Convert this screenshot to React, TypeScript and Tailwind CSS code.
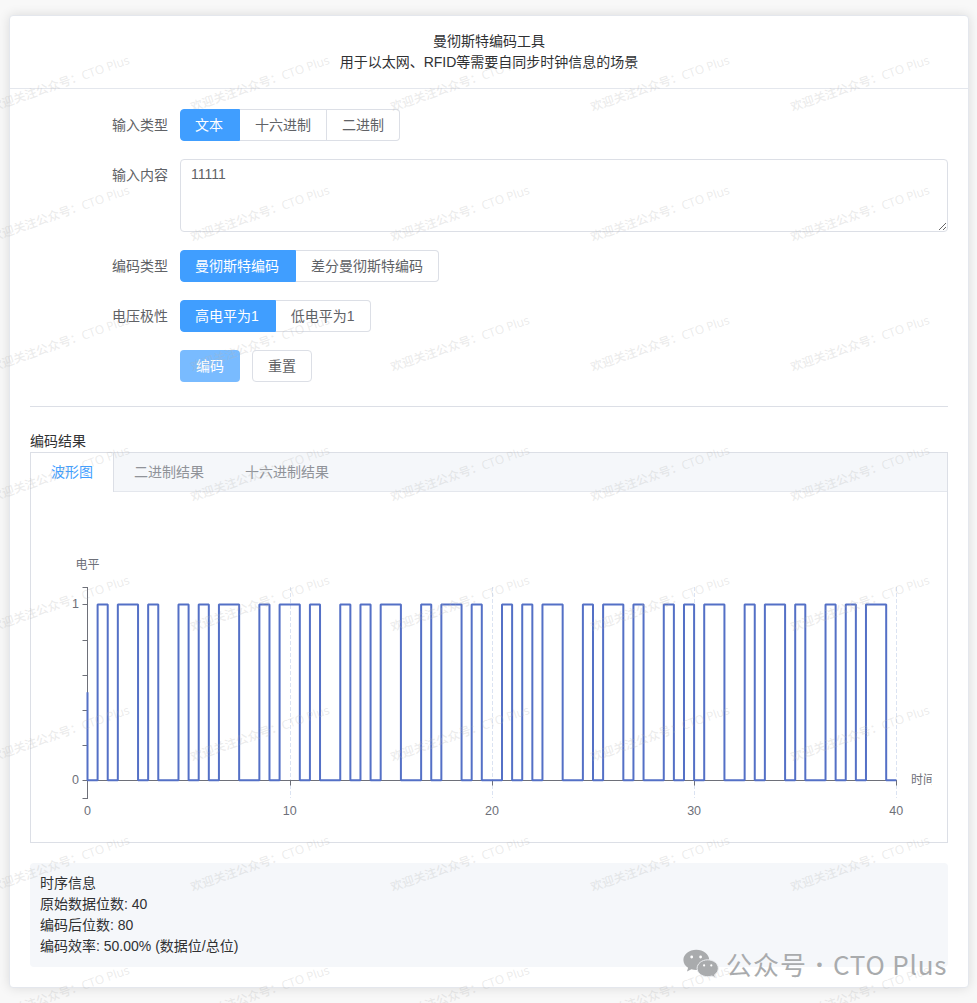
import React from "react";

const DATA = "11111";

const bits: number[] = DATA.split("").flatMap((ch) =>
  ch.charCodeAt(0).toString(2).padStart(8, "0").split("").map(Number)
);
const levels: number[] = bits.flatMap((b) => (b ? [1, 0] : [0, 1]));

const X0 = 41.5;
const X_UNIT = 20.22;
const Y_ONE = 97.4;
const Y_ZERO = 273.3;
const yOf = (v: number) => Y_ZERO - v * (Y_ZERO - Y_ONE);
const snap = (v: number) => Math.round(v) + 0.5;

function wavePath() {
  let d = `M${X0} ${yOf(0.5)}`;
  levels.forEach((v, i) => {
    d += `V${yOf(v)}H${X0 + (i + 1) * X_UNIT * 0.5}`;
  });
  return d;
}

function Segmented({ items }: { items: string[] }) {
  return (
    <div className="flex h-8">
      {items.map((t, i) => (
        <div
          key={t}
          className={
            "flex items-center border-y border-r text-sm leading-none " +
            (i === 0
              ? "relative z-20 rounded-l border-l border-[#409eff] bg-[#409eff] pl-[14px] pr-[16px] text-white"
              : "border-[#dcdfe6] px-[15px] text-[#606266] " + (i === items.length - 1 ? "rounded-r" : ""))
          }
        >
          {t}
        </div>
      ))}
    </div>
  );
}

function Row({ label, children }: { label: string; children: React.ReactNode }) {
  return (
    <div className="mb-[18px] flex">
      <div className="h-8 w-[150px] shrink-0 pr-3 text-right text-sm leading-8 text-[#606266]">{label}</div>
      <div className="flex min-w-0 flex-1">{children}</div>
    </div>
  );
}

function Waveform() {
  return (
    <svg width="886" height="320" className="block" fontSize="12" fill="#6e7079">
      {[10, 20, 30, 40].map((n) => (
        <path key={n} d={`M${snap(X0 + n * X_UNIT)} 80V291`} stroke="#dbe3f2" strokeDasharray="4 2" />
      ))}
      <path d={`M41.5 80V292M41 ${snap(Y_ZERO)}H851`} stroke="#6e7079" fill="none" />
      {[-0.1, 0, 0.2, 0.4, 0.6, 0.8, 1, 1.1].map((v) => (
        <path key={v} d={`M36.5 ${snap(yOf(v))}h5`} stroke="#6e7079" />
      ))}
      {[0, 10, 20, 30, 40].map((n) => (
        <g key={n}>
          {n > 0 && <path d={`M${snap(X0 + n * X_UNIT)} 273.5v5`} stroke="#6e7079" />}
          <text x={X0 + n * X_UNIT} y="308" textAnchor="middle" fontSize="12.5">
            {n}
          </text>
        </g>
      ))}
      <text x="33" y="101" textAnchor="end" fontSize="12.5">1</text>
      <text x="33" y="277" textAnchor="end" fontSize="12.5">0</text>
      <text x="41.5" y="62" textAnchor="middle">电平</text>
      <text x="865" y="277">时间</text>
      <path d={wavePath()} stroke="#5470c6" strokeWidth="2" strokeLinejoin="bevel" fill="none" />
    </svg>
  );
}

function Watermark() {
  const marks: [number, number][] = [];
  for (let r = 0; r < 8; r++) for (let c = -1; c < 4; c++) marks.push([192.5 + c * 200, 111.5 + r * 130]);
  return (
    <svg
      width="977"
      height="1003"
      className="pointer-events-none absolute left-0 top-0 z-10 font-['Open_Sans','Noto_Sans_CJK_SC',sans-serif] font-medium"
      fontSize="12"
      fill="#b4b4b4"
      fillOpacity="0.27"
    >
      {marks.map(([x, y]) => (
        <text key={`${x},${y}`} transform={`translate(${x} ${y}) rotate(-19.2)`}>
          欢迎关注公众号：CTO Plus
        </text>
      ))}
    </svg>
  );
}

function WechatMark() {
  return (
    <svg width="36" height="32" viewBox="0 0 36 32" fill="#a9abad">
      <path d="M13.3 1.700C6.200 1.700.4 6.200.4 11.900c0 3.200 1.800 6 4.700 7.900L4 23.500l4.400-2.300c1.500.5 3.200.8 4.900.8 7.100 0 12.900-4.600 12.900-10.200S20.400 1.700 13.300 1.700Z" />
      <path
        d="M24.700 11.800c5.900 0 10.600 3.800 10.600 8.500 0 2.600-1.400 4.900-3.700 6.400l.8 3-3.500-1.700c-1.300.4-2.700.7-4.200.7-5.900 0-10.600-3.800-10.600-8.400s4.700-8.500 10.600-8.500Z"
        stroke="#eceef1"
        strokeWidth="1"
      />
      <g fill="#fff">
        <circle cx="8.700" cy="9" r="1.400" />
        <circle cx="17.600" cy="9" r="1.400" />
        <circle cx="21.100" cy="17.400" r="1.100" />
        <circle cx="28.300" cy="17.400" r="1.100" />
      </g>
    </svg>
  );
}

export default function App() {
  return (
    <div className="relative h-[1003px] w-[977px] overflow-hidden bg-[#f8f8f8] pl-[9px] pt-[15px] font-['Liberation_Sans','Noto_Sans_CJK_SC',sans-serif] text-sm leading-[21px] text-[#303133]">
      <div className="h-[973px] w-[960px] rounded border border-[#e4e7ed] bg-white shadow-[0_0_12px_rgba(0,0,0,0.12)]">
        <header className="h-[73px] border-b border-[#e4e7ed] pt-[15px] text-center">
          <div>曼彻斯特编码工具</div>
          <div>用于以太网、RFID等需要自同步时钟信息的场景</div>
        </header>
        <main className="px-5 pt-5">
          <Row label="输入类型">
            <Segmented items={["文本", "十六进制", "二进制"]} />
          </Row>
          <Row label="输入内容">
            <textarea
              defaultValue={DATA}
              className="block h-[73px] w-full resize-y rounded border border-[#dcdfe6] px-[10px] py-[4px] text-sm leading-[21px] text-[#606266] outline-none"
            />
          </Row>
          <Row label="编码类型">
            <Segmented items={["曼彻斯特编码", "差分曼彻斯特编码"]} />
          </Row>
          <Row label="电压极性">
            <Segmented items={["高电平为1", "低电平为1"]} />
          </Row>
          <div className="flex gap-3 pl-[150px]">
            <button className="h-8 w-[60px] rounded bg-[#79bbff] text-sm text-white">编码</button>
            <button className="h-8 w-[60px] rounded border border-[#dcdfe6] text-sm text-[#606266]">重置</button>
          </div>
          <div className="mb-6 mt-6 h-px bg-[#dcdfe6]" />
          <div>编码结果</div>
          <section className="border border-[#dcdfe6]">
            <nav className="flex h-[39px] bg-[#f5f7fa] text-[#909399]">
              <div className="h-[39px] w-[83px] border-r border-[#dcdfe6] bg-white pl-5 leading-[38px] text-[#409eff]">
                波形图
              </div>
              <div className="flex flex-1 border-b border-[#e4e7ed] leading-[38px]">
                <div className="px-5">二进制结果</div>
                <div className="px-[21px]">十六进制结果</div>
              </div>
            </nav>
            <div className="p-[15px]">
              <Waveform />
            </div>
          </section>
          <section className="mt-5 rounded bg-[#f5f7fa] p-[10px]">
            <div>时序信息</div>
            <div>原始数据位数: 40</div>
            <div>编码后位数: 80</div>
            <div>编码效率: 50.00% (数据位/总位)</div>
          </section>
        </main>
      </div>
      <Watermark />
      <div className="absolute left-[683px] top-[946px] z-30 flex items-center font-['Noto_Sans_CJK_SC',sans-serif] text-[26px] leading-9 text-[#a9abad]">
        <WechatMark />
        <span className="ml-[7px] w-[81px] whitespace-nowrap tracking-[1px]">公众号</span>
        <span className="w-[25px] text-center font-['Open_Sans',sans-serif] font-bold">·</span>
        <span className="ml-px whitespace-nowrap tracking-[0.8px]">CTO Plus</span>
      </div>
    </div>
  );
}
